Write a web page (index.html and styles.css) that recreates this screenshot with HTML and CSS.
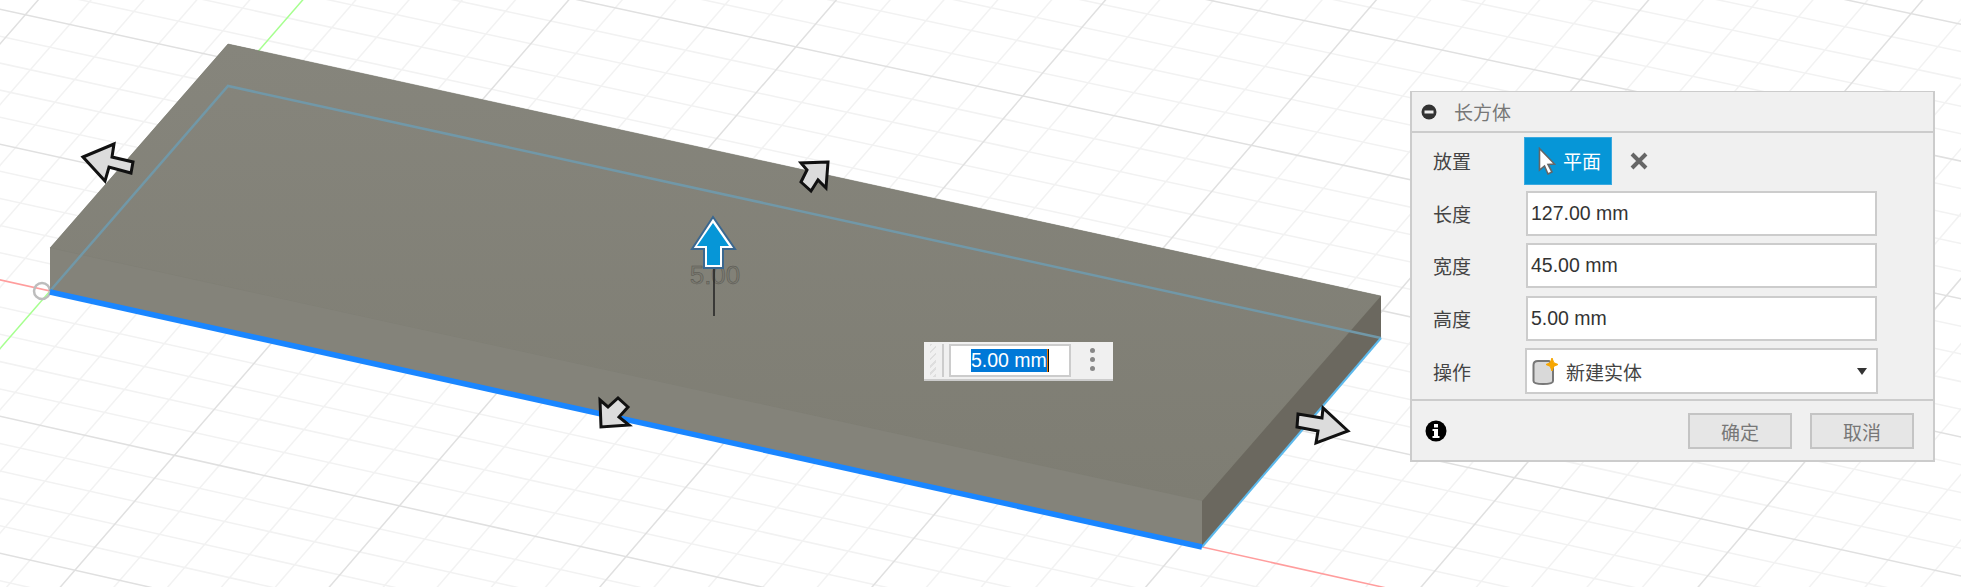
FILE: index.html
```html
<!DOCTYPE html>
<html lang="en">
<head>
    <meta charset="UTF-8">
    <meta name="viewport" content="width=device-width, initial-scale=1.0">
    <title>长方体</title>
    <link rel="stylesheet" href="styles.css">
</head>
<body>
    <div class="scene">
        <!-- 3d viewport -->
        <svg class="viewport" width="1961" height="587" viewBox="0 0 1961 587">
            <defs>
                <linearGradient id="topFace" x1="0" y1="0" x2="0" y2="1">
                    <stop offset="0" stop-color="#86857c"/>
                    <stop offset="1" stop-color="#7e7d73"/>
                </linearGradient>
            </defs>
            <g id="grid"></g>
            <circle class="origin" cx="42" cy="291" r="8"/>

            <polygon class="silhouette" points="228,44 1381,296 1381,338 1202,547 50,291 50,248"/>
            <polygon class="face-top" points="228,44 1381,296 1202,501 50,248"/>
            <polygon class="face-front" points="50,248 1202,501 1202,547 50,291"/>
            <polygon class="face-right" points="1202,501 1381,296 1381,338 1202,547"/>

            <polyline class="sketch-line" points="50,291 228,86 1381,338"/>
            <line class="edge-side" x1="1202" y1="547" x2="1381" y2="338"/>
            <line class="edge-selected" x1="50" y1="292" x2="1202" y2="547"/>

            <text class="ghost-value" x="715" y="284">5.00</text>
            <line class="leader" x1="714" y1="262" x2="714" y2="316"/>

            <polygon class="handle-up-outer" points="713,217 735,249 723,249 723,268 704,268 704,249 692,249"/>
            <polygon class="handle-up-inner" points="713,223 729,246 720,246 720,265 707,265 707,246 697,246"/>

            <polygon class="handle" points="83,157 114,144 112,157 133,162 131,173 109,167 105,181"/>
            <polygon class="handle" points="828,162 801,163 807,170 801,182 811,191 818,180 826,188"/>
            <polygon class="handle" points="601,427 600,400 608,407 618,398 628,407 619,417 629,425"/>
            <polygon class="handle" points="1348,431 1323,408 1322,418 1298,414 1297,427 1318,431 1316,443"/>
        </svg>

        <!-- floating value box -->
        <div class="mini-input">
            <div class="grip"></div>
            <div class="mini-field"><span class="selected">5.00 mm</span><span class="caret"></span></div>
            <div class="mini-menu"><i></i><i></i><i></i></div>
        </div>

        <!-- command dialog -->
        <div class="panel">
            <div class="panel-header">
                <svg class="collapse-icon" width="16" height="16" viewBox="0 0 16 16">
                    <circle cx="8" cy="8" r="7.5" fill="#333"/>
                    <rect x="3.5" y="6.5" width="9" height="3" fill="#eee"/>
                </svg>
                <span class="panel-title">长方体</span>
            </div>
            <div class="panel-body">
                <div class="row row-place">
                    <label>放置</label>
                    <div class="place-controls">
                        <button class="plane-btn">
                            <svg width="18" height="28" viewBox="0 0 18 28">
                                <polygon points="1.5,1.5 16.5,17 10,17.5 14,25 10,27 6.5,19 1.5,23" fill="#fff" stroke="#666" stroke-width="1.6"/>
                            </svg>
                            平面
                        </button>
                        <svg class="clear-icon" width="18" height="18" viewBox="0 0 18 18">
                            <path d="M2 2 L16 16 M16 2 L2 16" stroke="#666" stroke-width="4"/>
                        </svg>
                    </div>
                </div>
                <div class="row">
                    <label>长度</label>
                    <input class="field" value="127.00 mm">
                </div>
                <div class="row">
                    <label>宽度</label>
                    <input class="field" value="45.00 mm">
                </div>
                <div class="row row-height">
                    <label>高度</label>
                    <input class="field" value="5.00 mm">
                </div>
                <div class="row row-select">
                    <label>操作</label>
                    <div class="dropdown">
                        <svg class="body-icon" width="26" height="27" viewBox="0 0 26 27">
                            <path d="M1.5 7 Q1.5 3 6 3 L17 3 L21 8 L21 23 Q21 26 11 26 Q1.5 26 1.5 23 Z" fill="#d9d9d9" stroke="#777" stroke-width="2"/>
                            <path d="M20 0 L21.8 4.7 L26 6.5 L21.8 8.3 L20 13 L18.2 8.3 L14 6.5 L18.2 4.7 Z" fill="#f7a600" stroke="#f7a600" stroke-width="1"/>
                        </svg>
                        <span>新建实体</span>
                        <span class="dropdown-caret"></span>
                    </div>
                </div>
            </div>
            <div class="panel-footer">
                <svg class="info-icon" width="22" height="22" viewBox="0 0 22 22">
                    <circle cx="11" cy="11" r="10.5" fill="#000"/>
                    <rect x="9" y="4" width="4" height="3.5" fill="#fff"/>
                    <path d="M7.5 9 H13 V16 H14.5 V18 H7.5 V16 H9 V11 H7.5 Z" fill="#fff"/>
                </svg>
                <div class="footer-btns">
                    <button class="btn">确定</button>
                    <button class="btn">取消</button>
                </div>
            </div>
        </div>
    </div>

    <script src="grid.js"></script>
</body>
</html>
```

FILE: styles.css
```css
* {
    box-sizing: border-box;
}

body {
    margin: 0;
    padding: 0;
    background-color: #fff;
    font-family: "Liberation Sans", "Noto Sans CJK SC", Arial, sans-serif;
    font-size: 19px;
    color: #444;
}

.scene {
    position: relative;
    width: 1961px;
    height: 587px;
    overflow: hidden;
}

.viewport {
    position: absolute;
    left: 0;
    top: 0;
}

/* grid and axes */
.grid-minor {
    stroke: #f2f2f2;
    stroke-width: 1.5;
}

.grid-major {
    stroke: #e0e0e0;
    stroke-width: 1.5;
}

.axis-x {
    stroke: #ff9d9d;
    stroke-width: 1.5;
}

.axis-y {
    stroke: #a6ff8f;
    stroke-width: 1.5;
}

.origin {
    fill: none;
    stroke: #bdbdbd;
    stroke-width: 2.5;
}

/* box */
.silhouette {
    fill: #7f7e75;
}

.face-top {
    fill: url(#topFace);
    stroke: #7f7e75;
    stroke-width: 0.5;
}

.face-front {
    fill: #84837a;
}

.face-right {
    fill: #6b685f;
}

.sketch-line {
    fill: none;
    stroke: #7198a8;
    stroke-width: 2.5;
}

.edge-side {
    stroke: #5cb9ec;
    stroke-width: 2;
}

.edge-selected {
    stroke: #1a86ff;
    stroke-width: 5.5;
}

.ghost-value {
    font-size: 26px;
    text-anchor: middle;
    fill: rgba(60, 60, 55, 0.1);
    stroke: #55544d;
    stroke-width: 0.5;
}

.leader {
    stroke: #222;
    stroke-width: 1.5;
}

/* drag handles */
.handle {
    fill: #dcdcdc;
    stroke: #111;
    stroke-width: 3;
    stroke-linejoin: miter;
}

.handle-up-outer {
    fill: #fff;
    stroke: #3b678f;
    stroke-width: 2;
}

.handle-up-inner {
    fill: #0696d7;
}

/* floating value box */
.mini-input {
    position: absolute;
    left: 924px;
    top: 342px;
    width: 189px;
    height: 39px;
    display: flex;
    background-color: #f0f0f0;
    border-bottom: 2px solid #ccc;
}

.grip {
    width: 25px;
    height: 37px;
    margin-top: 2px;
    background:
        repeating-linear-gradient(135deg, #dedede 0 2px, transparent 2px 5px) 6px 0 / 6px 33px no-repeat,
        linear-gradient(#ccc, #ccc) 18px 0 / 2px 33px no-repeat;
}

.mini-field {
    width: 122px;
    height: 33px;
    margin-top: 2px;
    padding-left: 20px;
    display: flex;
    align-items: center;
    background-color: #fff;
    border: 2px solid #ccc;
    font-size: 19.5px;
}

.selected {
    display: block;
    height: 23px;
    line-height: 23px;
    background-color: #0078d7;
    color: #fff;
    white-space: nowrap;
}

.caret {
    display: block;
    width: 2px;
    height: 23px;
    background-color: #111;
    border-left: 1px solid #f07a00;
}

.mini-menu {
    flex: 1;
    display: flex;
    flex-direction: column;
    align-items: center;
    gap: 4px;
    padding-top: 6px;
}

.mini-menu i {
    display: block;
    width: 5px;
    height: 5px;
    border-radius: 50%;
    background-color: #888;
}

/* command dialog */
.panel {
    position: absolute;
    left: 1410px;
    top: 91px;
    width: 525px;
    height: 371px;
    background-color: #f0f0f0;
    border: 2px solid #ccc;
    border-top-width: 1px;
}

.panel-header {
    height: 41px;
    display: flex;
    align-items: center;
    padding-left: 9px;
    border-bottom: 2px solid #ccc;
}

.panel-title {
    margin-left: 17px;
    color: #777;
}

.panel-body {
    display: flex;
    flex-direction: column;
    gap: 7px;
    padding: 4px 0 0 21px;
}

.row {
    display: flex;
    align-items: center;
    height: 45px;
}

.row label {
    width: 93px;
    flex-shrink: 0;
}

.row-place {
    height: 47px;
}

.row-height {
    margin-top: 1px;
}

.row-select {
    height: 46px;
}

.place-controls {
    display: flex;
    align-items: center;
    margin-left: -2px;
}

.plane-btn {
    width: 88px;
    height: 48px;
    display: flex;
    align-items: center;
    gap: 7px;
    padding: 0 0 0 13px;
    background-color: #0696d7;
    border: 1px solid #3aa9e0;
    color: #fff;
    font: inherit;
}

.clear-icon {
    margin-left: 18px;
}

.field {
    width: 351px;
    height: 45px;
    padding: 0 3px;
    background-color: #fff;
    border: 2px solid #ccc;
    font: inherit;
    font-size: 19.5px;
    color: #333;
    outline: none;
}

.dropdown {
    width: 353px;
    height: 46px;
    margin-left: -1px;
    display: flex;
    align-items: center;
    padding: 0 9px 0 5px;
    background-color: #fff;
    border: 2px solid #ccc;
}

.body-icon {
    margin-right: 8px;
}

.dropdown-caret {
    margin-left: auto;
    width: 0;
    height: 0;
    border-left: 5px solid transparent;
    border-right: 5px solid transparent;
    border-top: 7px solid #333;
}

.panel-footer {
    display: flex;
    justify-content: space-between;
    align-items: center;
    height: 62px;
    margin-top: 5px;
    padding: 0 19px 0 13px;
    border-top: 2px solid #ccc;
}

.footer-btns {
    display: flex;
    gap: 18px;
}

.btn {
    width: 104px;
    height: 36px;
    padding: 0;
    background-color: #e6e6e6;
    border: 2px solid #c4c4c4;
    font: inherit;
    color: #777;
}
```

FILE: grid.js
```js
// corners of the 127 x 45 sketch on the ground, in screen pixels
const p0 = [50, 291], p1 = [1202, 547], p2 = [1381, 338], p3 = [228, 86];

const dx1 = p1[0] - p2[0], dx2 = p3[0] - p2[0], sx = p0[0] - p1[0] + p2[0] - p3[0];
const dy1 = p1[1] - p2[1], dy2 = p3[1] - p2[1], sy = p0[1] - p1[1] + p2[1] - p3[1];
const den = dx1 * dy2 - dx2 * dy1;
const g = (sx * dy2 - dx2 * sy) / den;
const h = (dx1 * sy - sx * dy1) / den;

// ground millimetres to screen
function project(x, y) {
    const u = x / 127, v = y / 45;
    const w = g * u + h * v + 1;
    return [
        ((p1[0] - p0[0] + g * p1[0]) * u + (p3[0] - p0[0] + h * p3[0]) * v + p0[0]) / w,
        ((p1[1] - p0[1] + g * p1[1]) * u + (p3[1] - p0[1] + h * p3[1]) * v + p0[1]) / w
    ];
}

function addLine(group, a, b, cls) {
    const line = document.createElementNS('http://www.w3.org/2000/svg', 'line');
    line.setAttribute('x1', a[0]);
    line.setAttribute('y1', a[1]);
    line.setAttribute('x2', b[0]);
    line.setAttribute('y2', b[1]);
    line.setAttribute('class', cls);
    group.appendChild(line);
}

const grid = document.getElementById('grid');
const minX = -100, maxX = 300, minY = -100, maxY = 150;

// minor first so the major lines and axes sit on top
[0, 1, 2].forEach(pass => {
    for (let x = minX; x <= maxX; x += 5) {
        const cls = x === 0 ? 'axis-y' : x % 25 === 0 ? 'grid-major' : 'grid-minor';
        const order = x === 0 ? 2 : x % 25 === 0 ? 1 : 0;
        if (order === pass) addLine(grid, project(x, minY), project(x, maxY), cls);
    }
    for (let y = minY; y <= maxY; y += 5) {
        const cls = y === 0 ? 'axis-x' : y % 25 === 0 ? 'grid-major' : 'grid-minor';
        const order = y === 0 ? 2 : y % 25 === 0 ? 1 : 0;
        if (order === pass) addLine(grid, project(minX, y), project(maxX, y), cls);
    }
});
```
